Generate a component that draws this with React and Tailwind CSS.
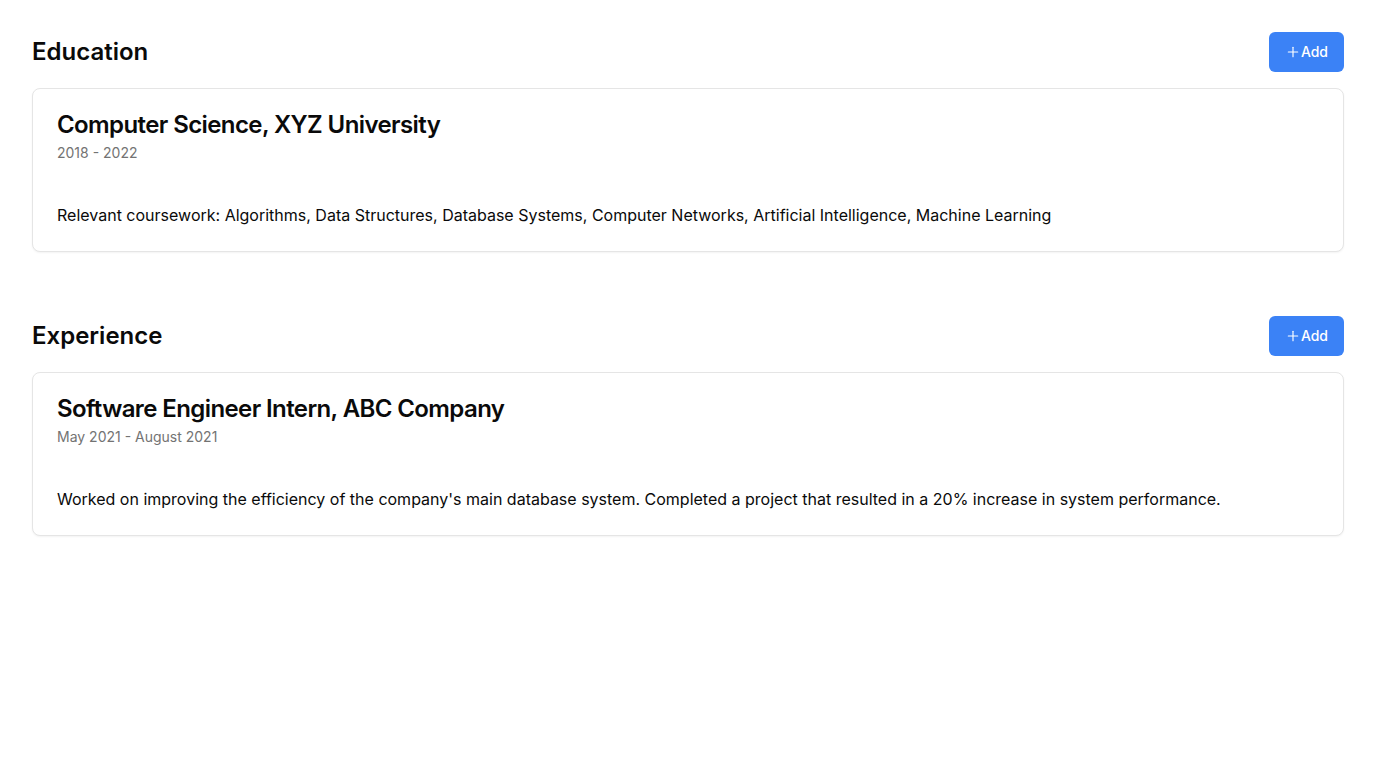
import React from 'react';
import { Plus } from 'lucide-react';

const sections = [
  {
    title: 'Education',
    items: [
      {
        heading: 'Computer Science, XYZ University',
        period: '2018 - 2022',
        text: 'Relevant coursework: Algorithms, Data Structures, Database Systems, Computer Networks, Artificial Intelligence, Machine Learning',
      },
    ],
  },
  {
    title: 'Experience',
    items: [
      {
        heading: 'Software Engineer Intern, ABC Company',
        period: 'May 2021 - August 2021',
        text: "Worked on improving the efficiency of the company's main database system. Completed a project that resulted in a 20% increase in system performance.",
      },
    ],
  },
];

function Section({ title, items }) {
  return (
    <section>
      <div className="flex items-center justify-between mb-4">
        <h2 className="text-2xl font-semibold text-neutral-950">{title}</h2>
        <button className="flex items-center h-10 px-4 rounded-md bg-[#3b82f6] text-white text-sm font-medium">
          <Plus className="w-4 h-4" strokeWidth={1.75} />
          Add
        </button>
      </div>
      <div className="space-y-4">
        {items.map((item) => (
          <div key={item.heading} className="rounded-lg border border-neutral-200 bg-white shadow-xs">
            <div className="p-6 flex flex-col space-y-1.5">
              <h3 className="text-2xl font-semibold leading-none tracking-tight text-neutral-950">{item.heading}</h3>
              <p className="text-sm text-neutral-500">{item.period}</p>
            </div>
            <div className="px-6 pb-6 pt-4">
              <p className="text-base text-neutral-950">{item.text}</p>
            </div>
          </div>
        ))}
      </div>
    </section>
  );
}

export default function App() {
  return (
    <div className="min-h-screen bg-white p-8 font-['Inter',sans-serif]">
      <div className="space-y-16">
        {sections.map((s) => (
          <Section key={s.title} {...s} />
        ))}
      </div>
    </div>
  );
}
